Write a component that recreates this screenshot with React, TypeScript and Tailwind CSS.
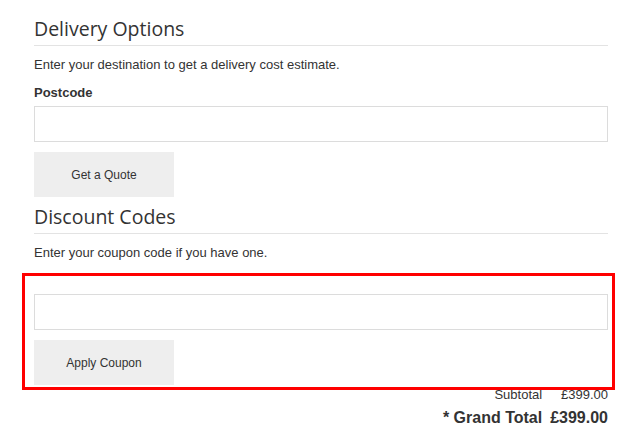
import React from "react";

const Heading = ({ children }: { children: React.ReactNode }) => (
  <div className="border-b border-[#e3e3e3] pb-[3px]">
    <h2 className="text-[19.5px] leading-[26px] text-[#333] font-['Open_Sans',sans-serif]">
      {children}
    </h2>
  </div>
);

const GreyButton = ({ label }: { label: string }) => (
  <button className="w-[140px] h-[45px] bg-[#eeeeee] text-[12px] text-[#333]">
    {label}
  </button>
);

export default function App() {
  return (
    <div className="w-[623px] h-[431px] bg-white overflow-hidden font-['Liberation_Sans',Arial,sans-serif] text-[#333]">
      <div className="pl-[34px] pr-[15px] pt-[16px]">
        {/* delivery estimate */}
        <Heading>Delivery Options</Heading>
        <p className="text-[13px] leading-[16px] mt-[11px]">
          Enter your destination to get a delivery cost estimate.
        </p>
        <label className="block text-[13px] leading-[16px] font-bold mt-[12px]">
          Postcode
        </label>
        <input
          type="text"
          className="block w-full h-[36px] mt-[5px] border border-[#dcdcdc] bg-white outline-none"
        />
        <div className="mt-[10px] flex">
          <GreyButton label="Get a Quote" />
        </div>

        {/* discount codes */}
        <div className="mt-[7px]">
          <Heading>Discount Codes</Heading>
        </div>
        <p className="text-[13px] leading-[16px] mt-[11px]">
          Enter your coupon code if you have one.
        </p>

        <div className="relative mt-[33px]">
          <input
            type="text"
            className="block w-full h-[36px] border border-[#dcdcdc] bg-white outline-none"
          />
          <div className="mt-[10px] flex">
            <GreyButton label="Apply Coupon" />
          </div>
          <div className="absolute left-[-12px] right-[-7px] top-[-21px] bottom-[-5px] border-[3px] border-[#ff0000] pointer-events-none z-10" />
        </div>

        {/* totals */}
        <div className="flex justify-end mt-[2px]">
          <table className="text-right">
            <tbody>
              <tr className="text-[13px] leading-[16px]">
                <td className="pr-[8px]">Subtotal</td>
                <td>£399.00</td>
              </tr>
              <tr className="text-[16px] font-bold leading-[24px]">
                <td className="pr-[8px] pt-[3px]">* Grand Total</td>
                <td className="pt-[3px]">£399.00</td>
              </tr>
            </tbody>
          </table>
        </div>
      </div>
    </div>
  );
}
